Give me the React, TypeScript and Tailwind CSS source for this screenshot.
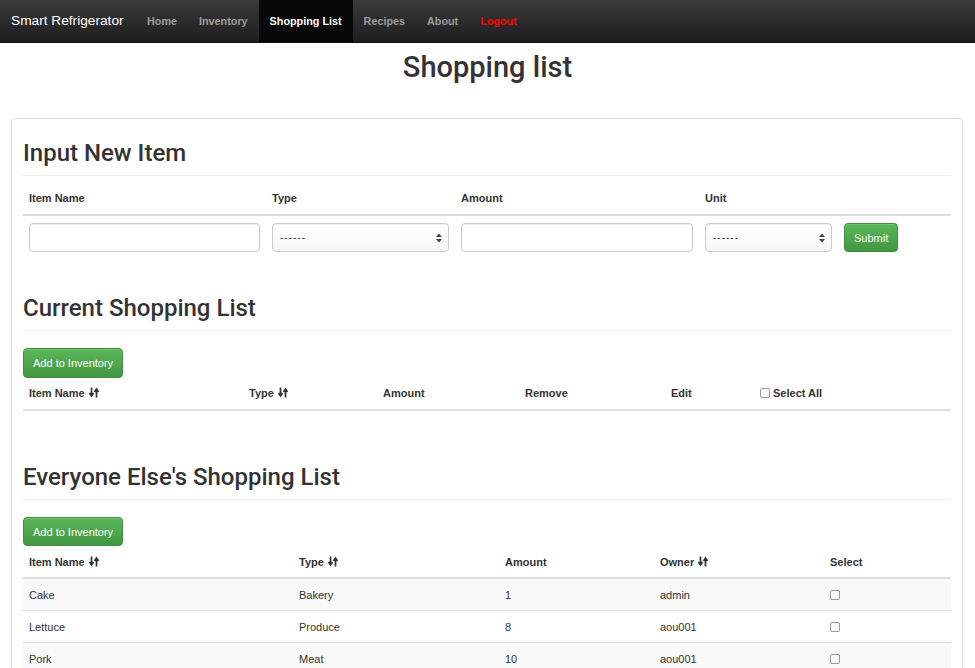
import React from "react"

const font = { fontFamily: '"Liberation Sans", Arial, Helvetica, sans-serif' }
const headFont = { fontFamily: 'Roboto, "Liberation Sans", Arial, sans-serif' }

function SortIcon() {
  return (
    <svg width="10" height="11" viewBox="0 0 10 11" className="inline-block ml-[4px] align-[-1px]">
      <path d="M2.5 0.5v7.5M0.5 6l2 3 2-3" stroke="#333" strokeWidth="1.7" fill="none" />
      <path d="M7.5 10.5V3M5.5 5l2-3 2 3" stroke="#333" strokeWidth="1.7" fill="none" />
    </svg>
  )
}

function Checkbox({ className = "" }: { className?: string }) {
  return (
    <span
      className={`inline-block w-[10px] h-[10px] border border-[#9a9a9a] rounded-[2px] bg-white align-[-1px] ${className}`}
    />
  )
}

function FakeSelect() {
  return (
    <div className="w-full h-[29px] border border-[#ccc] rounded-[4px] bg-gradient-to-b from-white to-[#f6f6f6] flex items-center justify-between pl-[7px] pr-[6px] shadow-[inset_0_1px_1px_rgba(0,0,0,0.06)]">
      <span className="text-[10px] text-[#333] tracking-[1px]">------</span>
      <svg width="6" height="10" viewBox="0 0 6 10">
        <path d="M0 4L3 0.5 6 4Z" fill="#444" />
        <path d="M0 6L3 9.5 6 6Z" fill="#444" />
      </svg>
    </div>
  )
}

function GreenButton({ children, className = "" }: { children: React.ReactNode; className?: string }) {
  return (
    <button
      className={`block px-[9px] rounded-[4px] border border-[#3e8f3e] bg-gradient-to-b from-[#5cb85c] to-[#419641] text-white text-[11px] leading-[16px] shadow-[inset_0_1px_0_rgba(255,255,255,0.15)] ${className}`}
    >
      {children}
    </button>
  )
}

function SectionHeading({ children, className = "" }: { children: React.ReactNode; className?: string }) {
  return (
    <h2
      className={`text-[24px] leading-[26px] font-medium text-[#333] pb-[9px] border-b border-[#eee] ${className}`}
      style={headFont}
    >
      {children}
    </h2>
  )
}

const th = "text-left font-bold text-[11px] leading-[16px] px-[6px] border-b-2 border-[#ddd] text-[#333] whitespace-nowrap"
const td = "px-[6px] pt-[8px] pb-[7px] border-t border-[#ddd] text-[#333]"

const others = [
  { name: "Cake", type: "Bakery", amount: "1", owner: "admin" },
  { name: "Lettuce", type: "Produce", amount: "8", owner: "aou001" },
  { name: "Pork", type: "Meat", amount: "10", owner: "aou001" },
]

export default function App() {
  return (
    <div className="w-[975px] h-[668px] overflow-hidden bg-white text-[#333]" style={font}>
      {/* navbar */}
      <nav className="h-[43px] flex items-stretch bg-gradient-to-b from-[#3a3a3a] to-[#1e1e1e] border-b border-[#101010]">
        <div className="w-[136px] pl-[11px] flex items-center text-white text-[13.7px]">Smart Refrigerator</div>
        <ul className="flex items-stretch text-[10.8px] font-bold">
          <li className="px-[11px] flex items-center text-[#9d9d9d]">Home</li>
          <li className="px-[11px] flex items-center text-[#9d9d9d]">Inventory</li>
          <li className="px-[11px] flex items-center text-white bg-[#080808]">Shopping List</li>
          <li className="px-[11px] flex items-center text-[#9d9d9d]">Recipes</li>
          <li className="px-[11px] flex items-center text-[#9d9d9d]">About</li>
          <li className="px-[11px] flex items-center text-[#ff0000]">Logout</li>
        </ul>
      </nav>

      <h1 className="mt-[8px] text-center text-[29px] leading-[32px] font-medium text-[#333]" style={headFont}>
        Shopping list
      </h1>

      <div className="mt-[35px] ml-[11px] mr-[12px] border border-[#ddd] rounded-[4px] px-[11px] pt-[21px] pb-[20px]">
        <SectionHeading>Input New Item</SectionHeading>

        <table className="w-full table-fixed border-collapse mt-[6px]">
          <colgroup>
            <col className="w-[243px]" />
            <col className="w-[189px]" />
            <col className="w-[244px]" />
            <col className="w-[139px]" />
            <col className="w-[113px]" />
          </colgroup>
          <thead>
            <tr>
              <th className={`${th} pt-[8px] pb-[8px]`}>Item Name</th>
              <th className={`${th} pt-[8px] pb-[8px]`}>Type</th>
              <th className={`${th} pt-[8px] pb-[8px]`}>Amount</th>
              <th className={`${th} pt-[8px] pb-[8px]`}>Unit</th>
              <th className={`${th} pt-[8px] pb-[8px]`}></th>
            </tr>
          </thead>
          <tbody>
            <tr>
              <td className="px-[6px] pt-[7px] pb-[7px]">
                <div className="h-[29px] border border-[#ccc] rounded-[4px] shadow-[inset_0_1px_1px_rgba(0,0,0,0.075)]" />
              </td>
              <td className="px-[6px] pt-[7px] pb-[7px]">
                <FakeSelect />
              </td>
              <td className="px-[6px] pt-[7px] pb-[7px]">
                <div className="h-[29px] border border-[#ccc] rounded-[4px] shadow-[inset_0_1px_1px_rgba(0,0,0,0.075)]" />
              </td>
              <td className="px-[6px] pt-[7px] pb-[7px]">
                <FakeSelect />
              </td>
              <td className="px-[6px] pt-[7px] pb-[7px]">
                <GreenButton className="h-[29px]">Submit</GreenButton>
              </td>
            </tr>
          </tbody>
        </table>

        <SectionHeading className="mt-[36px]">Current Shopping List</SectionHeading>
        <GreenButton className="mt-[17px] h-[30px]">Add to Inventory</GreenButton>
        <table className="w-full table-fixed border-collapse">
          <colgroup>
            <col className="w-[220px]" />
            <col className="w-[134px]" />
            <col className="w-[142px]" />
            <col className="w-[146px]" />
            <col className="w-[89px]" />
            <col className="w-[197px]" />
          </colgroup>
          <thead>
            <tr>
              <th className={`${th} pt-[7px] pb-[8px]`}>
                Item Name
                <SortIcon />
              </th>
              <th className={`${th} pt-[7px] pb-[8px]`}>
                Type
                <SortIcon />
              </th>
              <th className={`${th} pt-[7px] pb-[8px]`}>Amount</th>
              <th className={`${th} pt-[7px] pb-[8px]`}>Remove</th>
              <th className={`${th} pt-[7px] pb-[8px]`}>Edit</th>
              <th className={`${th} pt-[7px] pb-[8px]`}>
                <Checkbox className="mr-[3px]" />
                Select All
              </th>
            </tr>
          </thead>
        </table>

        <SectionHeading className="mt-[53px]">Everyone Else's Shopping List</SectionHeading>
        <GreenButton className="mt-[17px] h-[29px]">Add to Inventory</GreenButton>
        <table className="w-full table-fixed border-collapse">
          <colgroup>
            <col className="w-[270px]" />
            <col className="w-[206px]" />
            <col className="w-[155px]" />
            <col className="w-[170px]" />
            <col className="w-[127px]" />
          </colgroup>
          <thead>
            <tr>
              <th className={`${th} pt-[8px] pb-[7px]`}>
                Item Name
                <SortIcon />
              </th>
              <th className={`${th} pt-[8px] pb-[7px]`}>
                Type
                <SortIcon />
              </th>
              <th className={`${th} pt-[8px] pb-[7px]`}>Amount</th>
              <th className={`${th} pt-[8px] pb-[7px]`}>
                Owner
                <SortIcon />
              </th>
              <th className={`${th} pt-[8px] pb-[7px]`}>Select</th>
            </tr>
          </thead>
          <tbody className="text-[11px] leading-[16px]">
            {others.map((r, i) => (
              <tr key={r.name} className={i % 2 === 0 ? "bg-[#f9f9f9]" : "bg-white"}>
                <td className={td}>{r.name}</td>
                <td className={td}>{r.type}</td>
                <td className={td}>{r.amount}</td>
                <td className={td}>{r.owner}</td>
                <td className={td}>
                  <Checkbox />
                </td>
              </tr>
            ))}
          </tbody>
        </table>
      </div>
    </div>
  )
}
